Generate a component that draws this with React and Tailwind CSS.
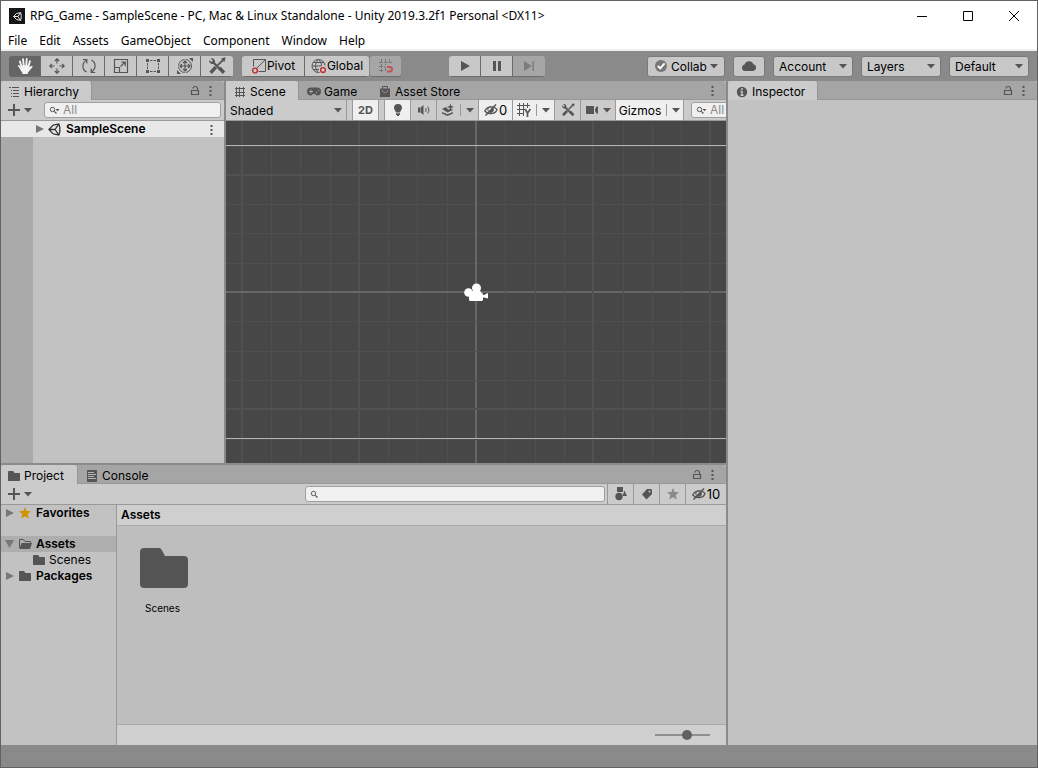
import React from 'react';

/* ---------- icons ---------- */

const Svg = ({ w = 16, h = 16, children, className = '' }) => (
  <svg
    width={w}
    height={h}
    viewBox={`0 0 ${w} ${h}`}
    fill="none"
    stroke="currentColor"
    aria-hidden="true"
    className={`shrink-0 ${className}`}
  >
    {children}
  </svg>
);

const Caret = ({ className = '' }) => (
  <Svg w={8} h={5} className={`text-[#555] ${className}`}>
    <path d="M0 0h8L4 4.5z" fill="currentColor" stroke="none" />
  </Svg>
);

const UnityMark = ({ size = 14, className = '' }) => (
  <svg
    width={size}
    height={size}
    viewBox="0 0 14 14"
    fill="none"
    stroke="currentColor"
    strokeWidth="1.4"
    aria-hidden="true"
    className={`shrink-0 ${className}`}
  >
    <path d="M5.5 2.3 11.7 1l1 3.8v4.4l-1 3.8-6.2-1.3M5.5 2.3 1 7l4.5 4.7M1 7h6.6M7.6 7l4.1-6M7.6 7l4.1 6" />
  </svg>
);

const HandIcon = () => (
  <Svg w={18} h={18} className="text-[#f4f4f4]">
    <path d="M5.4 9 3.9 4.4M7.8 8.5 7 2.2M10.3 8.5l.4-6.6M12.4 9.5l1.6-5.4" strokeWidth="1.8" strokeLinecap="round" />
    <path d="M4.6 8.2h8.5c.2 1.9.6 2.2 2.3.9.9-.6 1.7.2 1 1.1l-3.8 4.6c-.6.7-1 1.300-1 2.200H6.500c0-1.200-.9-2-1.500-3.200-.7-1.500-1.900-3.400-2.900-4.600-.6-.9.600-1.700 1.400-.9l1.500 1.700z" fill="currentColor" stroke="none" />
  </Svg>
);

const MoveIcon = () => (
  <Svg w={18} h={18}>
    <path d="M9 2v4.500M9 11.500V16M2 9h4.500M11.500 9H16M6.800 4 9 1.800 11.200 4M6.800 14 9 16.200l2.200-2.200M4 6.800 1.800 9 4 11.200M14 6.800 16.200 9 14 11.200" strokeWidth="1.2" />
  </Svg>
);

const RotateIcon = () => (
  <Svg w={18} h={18}>
    <path d="M6.500 15C1.800 12.500 1.600 6 6.600 3M2.800 2.500h4v4M11.500 3c4.700 2.500 4.900 9-.1 12M15.200 15.500h-4v-4" strokeWidth="1.2" />
  </Svg>
);

const ScaleIcon = () => (
  <Svg w={16} h={16}>
    <path d="M1.500 1.500h13v13h-13zM1.500 9.500h5v5M7.500 8.500l4.500-4.500M8 4h4.200v4.200" strokeWidth="1.2" />
  </Svg>
);

const RectIcon = () => (
  <Svg w={16} h={16}>
    <path d="M5 2.500h6M5 13.500h6M2.500 5v6M13.500 5v6" strokeDasharray="2.500 1 2.500" />
    <path d="M1 1h3v3H1zM12 1h3v3h-3zM1 12h3v3H1zM12 12h3v3h-3z" fill="currentColor" stroke="none" />
  </Svg>
);

const TransformIcon = () => (
  <Svg w={18} h={18}>
    <circle cx="9" cy="9" r="6.500" strokeDasharray="9 1.200" />
    <path d="M9 4v10M4 9h10M7 6l2-2 2 2M7 12l2 2 2-2M6 7 4 9l2 2M12 7l2 2-2 2" strokeWidth="1.2" />
    <path d="M13 1h4v4zM1 13v4h4z" fill="currentColor" stroke="none" />
  </Svg>
);

const WrenchIcon = ({ size = 18 }) => (
  <svg width={size} height={size} viewBox="0 0 16 16" fill="none" stroke="currentColor" aria-hidden="true" className="shrink-0">
    <path d="M4.500 4.500l7 7.500" strokeWidth="2" />
    <path d="M2.200 1.200C4.500.5 7 2.600 6 5.200L5 6.200C2.800 6.600.600 5 1 2.600l2 1.900 1.400-1.300z" fill="currentColor" stroke="none" />
    <path d="M10 9.500l4.200 4.500" strokeWidth="3" />
    <path d="M13.500 2.500 8.500 7.500" strokeWidth="1.600" />
    <path d="M12.500 1.600 15 1l-.7 2.600z" fill="currentColor" />
    <path d="M7 9l-4.700 5" strokeWidth="3" />
  </svg>
);

const PivotIcon = () => (
  <Svg w={16} h={16}>
    <path d="M2.500 8.500v-7h12v12H7.500M6 10l8-8" />
    <circle cx="4" cy="12.500" r="2.400" stroke="#c22c2c" strokeWidth="1.400" />
  </Svg>
);

const GlobalIcon = () => (
  <Svg w={16} h={16}>
    <path d="M8.500 14.500h-1a6.500 6.500 0 1 1 6.500-7M7.500 1.500c-4 3.500-4 9.500 0 13M7.500 1.500c2 1.800 3 4 3 6.500M2 4.500h11M1 8h9M2 11.500h6" />
    <circle cx="12" cy="12" r="2.400" stroke="#c22c2c" strokeWidth="1.400" />
  </Svg>
);

const SnapIcon = () => (
  <Svg w={16} h={16} className="text-[#777]">
    <path d="M3.500 1v13M7.500 1v6M11.500 1v5M1 4.500h13M1 8.500h6M1 12.500h4M7.500 9v5" strokeDasharray="4 1" />
    <path d="M9 9h2.700a2.200 2.200 0 0 1 0 4.500H9" stroke="#c35454" strokeWidth="2" />
  </Svg>
);

const PlayIcon = () => (
  <Svg><path d="M4 3l9 5-9 5z" fill="currentColor" stroke="none" /></Svg>
);

const PauseIcon = () => (
  <Svg><path d="M4 3h3v10H4zM9 3h3v10H9z" fill="currentColor" stroke="none" /></Svg>
);

const StepIcon = () => (
  <Svg className="text-[#7d7d7d]"><path d="M3 3l8 5-8 5zM11.500 3H13v10h-1.500z" fill="currentColor" stroke="none" /></Svg>
);

const CollabIcon = () => (
  <Svg w={14} h={14}>
    <circle cx="7" cy="7" r="6" fill="#777" stroke="none" />
    <path d="M3.800 7l2.400 2.300 4.400-5" stroke="#fff" strokeWidth="1.900" />
  </Svg>
);

const CloudIcon = () => (
  <Svg w={16} h={12}>
    <path d="M4 11a3.300 3.300 0 0 1-.4-6.500A4.600 4.600 0 0 1 12.400 4.300 3.400 3.400 0 0 1 12 11z" fill="currentColor" stroke="none" />
  </Svg>
);

const ListIcon = () => (
  <Svg w={12} h={12}>
    <path d="M1 1.500h2M4 1.500h7M3 4.500h1M5 4.500h6M3 7.500h1M5 7.500h6M3 10.500h1M5 10.500h6" />
  </Svg>
);

const GridIcon = () => (
  <Svg w={12} h={12}>
    <path d="M2.500 1v10M5.500 1v10M9.500 1v10M1 2.500h10M1 6.500h10M1 9.500h10" />
  </Svg>
);

const GamepadIcon = () => (
  <Svg w={14} h={9}>
    <path d="M4 .5h6a4 4 0 0 1 0 8C9 8.500 8.500 7 8 7H6c-.5 0-1 1.500-2 1.500a4 4 0 0 1 0-8z" fill="currentColor" stroke="none" />
    <path d="M2 4.500h4M4 2.500v4M9 5.500h1M11 3.500h1" stroke="#a5a5a5" />
  </Svg>
);

const BagIcon = () => (
  <Svg w={12} h={13}>
    <path d="M3.500 4V1.500h5V4" />
    <path d="M1 3.500h10V12H1z" fill="currentColor" stroke="none" />
    <path d="M3.500 5v1c0 2 5 2 5 0V5" stroke="#8d8d8d" />
  </Svg>
);

const LockIcon = () => (
  <Svg w={10} h={11} className="text-[#555]">
    <path d="M1.500 5.500h7v4h-7zM3 3.500C3 .8 7.500.8 7.500 3.500v2" strokeWidth="1.200" />
  </Svg>
);

const DotsIcon = () => (
  <Svg w={3} h={11} className="text-[#555]">
    <path d="M.5 1h2v2h-2zM.5 5h2v2h-2zM.5 9h2v2h-2z" fill="currentColor" stroke="none" />
  </Svg>
);

const InfoIcon = () => (
  <Svg w={12} h={12}>
    <circle cx="6" cy="6" r="5.200" fill="currentColor" stroke="none" />
    <path d="M6 2v2M4.500 5.500H6V9M4.500 9.200h3" stroke="#cbcbcb" strokeWidth="1.400" />
  </Svg>
);

const PlusIcon = () => (
  <Svg w={12} h={12}><path d="M6 0v12M0 6h12" strokeWidth="2" /></Svg>
);

const SearchIcon = ({ menu }) => (
  <Svg w={11} h={9}>
    <circle cx="3.500" cy="3.500" r="2.200" />
    <path d="M5.300 5.300 7.500 7.500" strokeWidth="1.200" />
    {menu && <path d="M6.500 3h4l-2 2.200z" fill="currentColor" stroke="none" />}
  </Svg>
);

const FoldIcon = ({ open }) => (
  <Svg w={10} h={10} className="text-[#777]">
    <path d={open ? 'M0 1h9L4.500 9z' : 'M1 1l8 4-8 4z'} fill="currentColor" stroke="none" />
  </Svg>
);

const FolderIcon = () => (
  <Svg w={14} h={12} className="text-[#555]">
    <path d="M1 2c0-.6.4-1 1-1h4l1.500 2H12c.6 0 1 .4 1 1v6c0 .6-.4 1-1 1H2c-.6 0-1-.4-1-1z" fill="currentColor" stroke="none" />
  </Svg>
);

const OpenFolderIcon = () => (
  <Svg w={14} h={12} className="text-[#555]">
    <path d="M1.500 10V1.500h4l1.500 2h5.500V5" />
    <path d="M3.500 5H14l-2 6H1.500z" fill="currentColor" stroke="none" />
  </Svg>
);

const StarIcon = ({ className }) => (
  <Svg w={12} h={12} className={className}>
    <path d="M6 0l1.700 4 4.300.3-3.300 2.800 1.100 4.400L6 9.200l-3.800 2.300 1.100-4.400L0 4.300 4.300 4z" fill="currentColor" stroke="none" />
  </Svg>
);

const ConsoleIcon = () => (
  <Svg w={12} h={12}>
    <path d="M1 0h10v12H1z" fill="currentColor" stroke="none" />
    <path d="M2 2.500h6M2 4.500h8M2 6.500h6M2 8.500h8" stroke="#b5b5b5" />
  </Svg>
);

const BulbIcon = () => (
  <Svg w={12} h={14}>
    <path d="M6 1a4 4 0 0 1 4 4c0 2-1.800 2.600-1.800 4.500H3.800C3.800 7.600 2 7 2 5a4 4 0 0 1 4-4zM4 10.300h4V12H4zM5 12h2v1H5z" fill="currentColor" stroke="none" />
  </Svg>
);

const AudioIcon = () => (
  <Svg w={14} h={12}>
    <path d="M1 3.500h2v5H1zM3.500 3.500 6.500 1v10L3.500 8.500z" fill="currentColor" stroke="none" />
    <path d="M8.500 4c.8 1.200.8 2.800 0 4M10.500 2.500c1.800 2 1.800 5 0 7" />
  </Svg>
);

const EffectsIcon = () => (
  <Svg w={14} h={14}>
    <path d="M1 6l4-2 2 2.500 3.500-.5L12 7 6.500 9.500zM1 9l5.500 2.300L12 9v1.500L6.500 13 1 10.500z" fill="currentColor" stroke="none" />
    <path d="M9.500.5l.9 2.600 2.600.9-2.600.9-.9 2.600-.9-2.600L6 4l2.600-.9z" fill="currentColor" stroke="none" />
  </Svg>
);

const HiddenIcon = () => (
  <Svg w={14} h={12}>
    <path d="M.800 7C3 2.200 10 1.500 13 5.500 11.500 10.500 4 11 .8 7z" strokeWidth="1.300" />
    <path d="M8.500 3.200a2.800 2.800 0 0 1-3.500 5z" fill="currentColor" stroke="none" />
    <path d="M4.500 7.500a2.800 2.800 0 0 1 3-4.500" />
    <path d="M1.500 11.500 12 .5" strokeWidth="1.500" />
  </Svg>
);

const GridAxisIcon = () => (
  <Svg w={14} h={14}>
    <path d="M2.500 0v13M6.500 0v13M10.500 0v5M0 2.500h13M0 6.500h8M0 10.500h6" />
    <path d="M8 6l2.500 4v4M13.500 6l-3 4" strokeWidth="1.700" />
  </Svg>
);

const CameraIcon = () => (
  <Svg w={14} h={10}>
    <path d="M1 1h8v8H1zM10 4l1.500-2.500H13v7h-1.500L10 6z" fill="currentColor" stroke="none" />
  </Svg>
);

const ShapesIcon = () => (
  <Svg w={14} h={14}>
    <path d="M3 0h6v5H3zM8.500 9 10.500 3.500 13 9z" fill="currentColor" stroke="none" />
    <circle cx="5" cy="9.500" r="3.700" fill="currentColor" stroke="none" />
  </Svg>
);

const TagIcon = () => (
  <Svg w={12} h={12}>
    <path d="M6 1h4.300l.7.700V6l-5.500 5.500L1 6.500z" fill="currentColor" stroke="none" />
    <circle cx="8.500" cy="3.500" r="1" fill="#cbcbcb" stroke="none" />
  </Svg>
);

/* ---------- shared controls ---------- */

const BarButton = ({ label, children, className = '' }) => (
  <button
    type="button"
    aria-label={label}
    className={`flex h-[21px] items-center justify-center border-b border-[#6b6b6b] text-[#555] ${className}`}
  >
    {children}
  </button>
);

const BarSelect = ({ label }) => (
  <span className="relative flex h-[21px] w-20 items-center rounded-[3px] border border-[#7a7a7a] bg-[#c8c8c8]">
    <select aria-label={label} className="h-full w-full appearance-none bg-transparent pt-px pl-[5px] text-black outline-none">
      <option>{label}</option>
    </select>
    <Caret className="pointer-events-none absolute right-[5px]" />
  </span>
);

const Tab = ({ icon, children, active, className = '' }) => (
  <button
    type="button"
    role="tab"
    aria-selected={!!active}
    className={`flex h-[19px] items-center gap-[3px] text-black ${
      active ? 'rounded-t-[3px] border-r border-[#959595] bg-[#cbcbcb] pt-0.5' : 'border-b border-[#999] pt-[3px]'
    } ${className}`}
  >
    <span className="flex w-3.5 justify-center text-[#555]">{icon}</span>
    {children}
  </button>
);

const TabBar = ({ children, lock }) => (
  <div className="flex h-[19px] shrink-0 rounded-t-[3px] bg-[#a5a5a5]">
    <div role="tablist" className="flex">{children}</div>
    <div className="flex flex-1 items-center justify-end gap-[9px] border-b border-[#999] pr-3">
      {lock && <button type="button" aria-label="Lock"><LockIcon /></button>}
      <button type="button" aria-label="Panel menu"><DotsIcon /></button>
    </div>
  </div>
);

const Cell = ({ label, on, children, className = '' }) => (
  <button
    type="button"
    aria-label={label}
    className={`flex h-full shrink-0 items-center justify-center border-r border-[#999] text-[#555] ${
      on ? 'bg-[#efefef]' : ''
    } ${className}`}
  >
    {children}
  </button>
);

const SearchField = ({ label, placeholder, menu, className = '' }) => (
  <label className={`flex h-4 items-center gap-[3px] rounded-[3px] border border-[#a0a0a0] bg-[#f0f0f0] pl-1 text-[#555] ${className}`}>
    <SearchIcon menu={menu} />
    <input
      type="text"
      aria-label={label}
      placeholder={placeholder}
      className="w-full min-w-0 bg-transparent text-black outline-none placeholder:text-[#8a8a8a]"
    />
  </label>
);

const AddButton = () => (
  <button type="button" aria-label="Create" className="flex items-center gap-1 text-[#555]">
    <PlusIcon />
    <Caret />
  </button>
);

/* ---------- window chrome ---------- */

const MENUS = ['File', 'Edit', 'Assets', 'GameObject', 'Component', 'Window', 'Help'];

const TitleBar = () => (
  <header className="shrink-0 border-b-2 border-[#f0f0f0] bg-white font-['Noto_Sans',sans-serif] text-xs text-black">
    <div className="flex h-[30px] items-center pl-2">
      <span className="flex size-4 items-center justify-center bg-[#161616] text-white">
        <UnityMark size={9} />
      </span>
      <h1 className="ml-[5px] flex-1 whitespace-nowrap">
        RPG_Game - SampleScene - PC, Mac &amp; Linux Standalone - Unity 2019.3.2f1 Personal &lt;DX11&gt;
      </h1>
      <div className="flex">
        <button type="button" aria-label="Minimize" className="flex h-7 w-[46px] items-center justify-center">
          <Svg w={10} h={10}><path d="M0 5.500h10" /></Svg>
        </button>
        <button type="button" aria-label="Maximize" className="flex h-7 w-[46px] items-center justify-center">
          <Svg w={10} h={10}><path d="M.5.500h9v9h-9z" /></Svg>
        </button>
        <button type="button" aria-label="Close" className="flex h-7 w-[46px] items-center justify-center">
          <Svg w={10} h={10}><path d="M0 0l10 10M10 0 0 10" /></Svg>
        </button>
      </div>
    </div>
    <nav className="flex h-[18px] items-center gap-3 pt-0.5 pl-[7px]">
      {MENUS.map((m) => (
        <button key={m} type="button">{m}</button>
      ))}
    </nav>
  </header>
);

const TOOLS = [
  ['Hand', HandIcon],
  ['Move', MoveIcon],
  ['Rotate', RotateIcon],
  ['Scale', ScaleIcon],
  ['Rect', RectIcon],
  ['Transform', TransformIcon],
  ['Custom tools', WrenchIcon],
];

const MainToolbar = () => (
  <div className="flex h-[30px] shrink-0 items-center bg-[#8a8a8a] px-2">
    <div className="flex overflow-hidden rounded-[3px]">
      {TOOLS.map(([name, Icon], i) => (
        <BarButton
          key={name}
          label={name}
          className={`w-8 ${i === 0 ? 'bg-[#656565]' : 'bg-[#c8c8c8]'} ${i < 6 ? 'border-r' : ''}`}
        >
          <Icon />
        </BarButton>
      ))}
    </div>
    <div className="ml-[9px] flex overflow-hidden rounded-[3px]">
      <BarButton className="w-[63px] border-r bg-[#c8c8c8]">
        <PivotIcon />
        <span className="pt-px text-black">Pivot</span>
      </BarButton>
      <BarButton className="w-16 bg-[#c8c8c8]">
        <GlobalIcon />
        <span className="pt-px text-black">Global</span>
      </BarButton>
    </div>
    <BarButton label="Grid snapping" className="ml-px w-[31px] rounded-[3px] bg-[#a6a6a6]">
      <SnapIcon />
    </BarButton>
    <div className="ml-12 flex overflow-hidden rounded-[3px]">
      <BarButton label="Play" className="w-8 border-r bg-[#c8c8c8]"><PlayIcon /></BarButton>
      <BarButton label="Pause" className="w-8 border-r bg-[#c8c8c8]"><PauseIcon /></BarButton>
      <BarButton label="Step" className="w-8 bg-[#a6a6a6]"><StepIcon /></BarButton>
    </div>
    <div className="ml-auto flex gap-2">
      <BarButton className="w-[78px] gap-[3px] rounded-[3px] border border-[#7a7a7a] bg-[#c8c8c8]">
        <CollabIcon />
        <span className="pt-px text-black">Collab</span>
        <Caret />
      </BarButton>
      <BarButton label="Cloud services" className="w-8 rounded-[3px] border border-[#7a7a7a] bg-[#c8c8c8]">
        <CloudIcon />
      </BarButton>
      <BarSelect label="Account" />
      <BarSelect label="Layers" />
      <BarSelect label="Default" />
    </div>
  </div>
);

/* ---------- panels ---------- */

const Hierarchy = () => (
  <section className="flex w-[223px] shrink-0 flex-col bg-[#c2c2c2]">
    <TabBar lock>
      <Tab active icon={<ListIcon />} className="w-[91px] pl-1.5">Hierarchy</Tab>
    </TabBar>
    <div className="flex h-[21px] shrink-0 items-center gap-3 border-b border-[#999] bg-[#cbcbcb] pr-[3px] pl-[7px]">
      <AddButton />
      <SearchField label="Search hierarchy" placeholder="All" menu className="flex-1" />
    </div>
    <div className="flex h-4 shrink-0 items-center bg-[#e8e8e8] pr-[11px] pl-[34px] font-semibold">
      <FoldIcon />
      <UnityMark size={13} className="ml-[3px] text-[#333]" />
      <span className="ml-[5px] flex-1">SampleScene</span>
      <DotsIcon />
    </div>
    <div className="w-8 flex-1 bg-[#aaa]" />
  </section>
);

const STEP = 29.3;
const LINES = Array.from({ length: 121 }, (_, i) => i - 60);

const SceneView = () => (
  <svg width="100%" height="100%" className="absolute inset-0 bg-[#474747]" role="img" aria-label="Scene view">
    <svg x="50%" y="50%" overflow="visible">
      {LINES.map((i) => {
        const major = i % 4 === 0;
        const at = Math.round(i * STEP) - (major ? 1 : 0);
        const color = i === 0 ? '#676767' : major ? '#515151' : '#4f4f4f';
        const size = major ? 2 : 1;
        return (
          <g key={i} fill={color}>
            <rect x={at} y="-2000" width={size} height="4000" />
            <rect x="-2000" y={at} width="4000" height={size} />
          </g>
        );
      })}
      <path d="M-2000 -146.500H2000M-2000 146.500H2000" stroke="#b4b4b4" />
      <g fill="#fff">
        <circle cx="-7.500" cy="0.500" r="4.300" />
        <circle cx="0.500" cy="-4" r="4.500" />
        <path d="M-7 -1H4l3 3v5.500a1.500 1.500 0 0 1-1.500 1.500h-11A1.500 1.500 0 0 1-7 7.500z" />
        <path d="M6 3h2l4-2v5.500L8 5.500H6z" />
      </g>
    </svg>
  </svg>
);

const Split = () => <span className="mx-[5px] h-3 w-px bg-[#999]" />;

const Scene = () => (
  <section className="flex min-w-0 flex-1 flex-col bg-[#cbcbcb]">
    <TabBar>
      <Tab active icon={<GridIcon />} className="w-[73px] pl-[7px]">Scene</Tab>
      <Tab icon={<GamepadIcon />} className="w-[72px] pl-2">Game</Tab>
      <Tab icon={<BagIcon />} className="w-24 pl-[7px] whitespace-nowrap">Asset Store</Tab>
    </TabBar>
    <div className="flex h-[21px] shrink-0 overflow-hidden border-b border-[#999]">
      <span className="relative flex w-[121px] shrink-0 items-center border-r border-[#999]">
        <select aria-label="Draw mode" className="h-full w-full appearance-none bg-transparent pt-0.5 pl-1 outline-none">
          <option>Shaded</option>
        </select>
        <Caret className="pointer-events-none absolute right-1" />
      </span>
      <Cell on className="ml-[5px] w-[27px] border-l text-[11px] font-bold">2D</Cell>
      <Cell label="Lighting" on className="ml-[5px] w-[27px] border-l"><BulbIcon /></Cell>
      <Cell label="Audio" className="w-[26px]"><AudioIcon /></Cell>
      <Cell label="Effects" className="w-[42px]">
        <EffectsIcon />
        <Split />
        <Caret />
      </Cell>
      <Cell on label="Hidden objects" className="w-[34px] gap-px">
        <HiddenIcon />
        <span className="pt-0.5 text-[13px] text-black">0</span>
      </Cell>
      <Cell on label="Grid" className="w-[42px]">
        <GridAxisIcon />
        <Split />
        <Caret />
      </Cell>
      <Cell label="Component tools" className="w-[26px]"><WrenchIcon size={14} /></Cell>
      <Cell label="Scene camera" className="w-[35px] gap-1"><CameraIcon /><Caret /></Cell>
      <Cell on className="w-[68px]">
        <span className="pt-0.5 text-black">Gizmos</span>
        <Split />
        <Caret />
      </Cell>
      <SearchField label="Search scene" placeholder="All" menu className="mt-0.5 ml-[7px] w-40 shrink-0" />
    </div>
    <div className="relative flex-1">
      <SceneView />
    </div>
  </section>
);

const treeRow = 'flex h-4 items-center whitespace-nowrap';

const Project = () => (
  <section className="flex h-[280px] shrink-0 flex-col bg-[#bebebe]">
    <TabBar lock>
      <Tab active icon={<FolderIcon />} className="w-[77px] pl-1.5">Project</Tab>
      <Tab icon={<ConsoleIcon />} className="w-20 pl-[7px]">Console</Tab>
    </TabBar>
    <div className="flex h-[21px] shrink-0 items-center border-b border-[#999] bg-[#cbcbcb] pl-[7px]">
      <AddButton />
      <SearchField label="Search project" className="mr-0.5 ml-auto w-[300px]" />
      <Cell label="Search by type" className="w-[27px] border-l"><ShapesIcon /></Cell>
      <Cell label="Search by label" className="w-[26px]"><TagIcon /></Cell>
      <Cell label="Save search" className="w-[26px]"><StarIcon className="text-[#8a8a8a]" /></Cell>
      <button type="button" aria-label="Hidden packages" className="flex h-full w-10 items-center justify-center gap-px text-[#555]">
        <HiddenIcon />
        <span className="pt-0.5 text-[13px] text-black">10</span>
      </button>
    </div>
    <div className="flex min-h-0 flex-1">
      <div className="w-[116px] shrink-0 border-r border-[#999] bg-[#c2c2c2] font-semibold">
        <div className={`${treeRow} mb-[15px] gap-[3px] pl-1`}>
          <FoldIcon />
          <span className="flex w-3.5 justify-center"><StarIcon className="text-[#cc9400]" /></span>
          <span className="pl-px">Favorites</span>
        </div>
        <div className={`${treeRow} gap-[3px] bg-[#aeaeae] pl-1`}>
          <FoldIcon open />
          <OpenFolderIcon />
          <span className="pl-px">Assets</span>
        </div>
        <div className={`${treeRow} gap-[3px] pl-[31px] font-normal`}>
          <FolderIcon />
          Scenes
        </div>
        <div className={`${treeRow} gap-[3px] pl-1`}>
          <FoldIcon />
          <FolderIcon />
          <span className="pl-px">Packages</span>
        </div>
      </div>
      <div className="flex min-w-0 flex-1 flex-col">
        <h2 className="flex h-[21px] shrink-0 items-center border-b border-[#aaa] bg-[#cfcfcf] pl-1 font-semibold">Assets</h2>
        <div className="flex flex-1 items-start pt-[22px] pl-[23px]">
          <button type="button" className="flex w-12 flex-col items-center gap-3.5 text-[10px]">
            <Svg w={48} h={40} className="text-[#555]">
              <path d="M0 4a4 4 0 0 1 4-4h15c1.500 0 2 .8 2.600 1.800L25 8h19a4 4 0 0 1 4 4v24a4 4 0 0 1-4 4H4a4 4 0 0 1-4-4z" fill="currentColor" stroke="none" />
            </Svg>
            <span className="pr-[3px]">Scenes</span>
          </button>
        </div>
        <div className="flex h-[21px] shrink-0 items-center justify-end border-t border-[#aaa] bg-[#cfcfcf] pr-4">
          <input
            type="range"
            aria-label="Icon size"
            defaultValue="60"
            className="h-2.5 w-[55px] appearance-none bg-transparent [&::-webkit-slider-runnable-track]:h-0.5 [&::-webkit-slider-runnable-track]:bg-[#8f8f8f] [&::-webkit-slider-thumb]:-mt-1 [&::-webkit-slider-thumb]:size-2.5 [&::-webkit-slider-thumb]:appearance-none [&::-webkit-slider-thumb]:rounded-full [&::-webkit-slider-thumb]:bg-[#616161]"
          />
        </div>
      </div>
    </div>
  </section>
);

const Inspector = () => (
  <section className="flex w-[309px] shrink-0 flex-col bg-[#c2c2c2]">
    <TabBar lock>
      <Tab active icon={<InfoIcon />} className="w-[90px] pl-[7px]">Inspector</Tab>
    </TabBar>
  </section>
);

const App = () => (
  <div className="flex h-screen flex-col border border-[#626262] bg-[#8a8a8a] font-[Inter,sans-serif] text-xs text-black">
    <TitleBar />
    <MainToolbar />
    <main className="flex min-h-0 flex-1 gap-0.5">
      <div className="flex min-w-0 flex-1 flex-col gap-0.5">
        <div className="flex min-h-0 flex-1 gap-0.5">
          <Hierarchy />
          <Scene />
        </div>
        <Project />
      </div>
      <Inspector />
    </main>
    <footer className="h-[22px] shrink-0 bg-[#8a8a8a]" />
  </div>
);

export default App;
